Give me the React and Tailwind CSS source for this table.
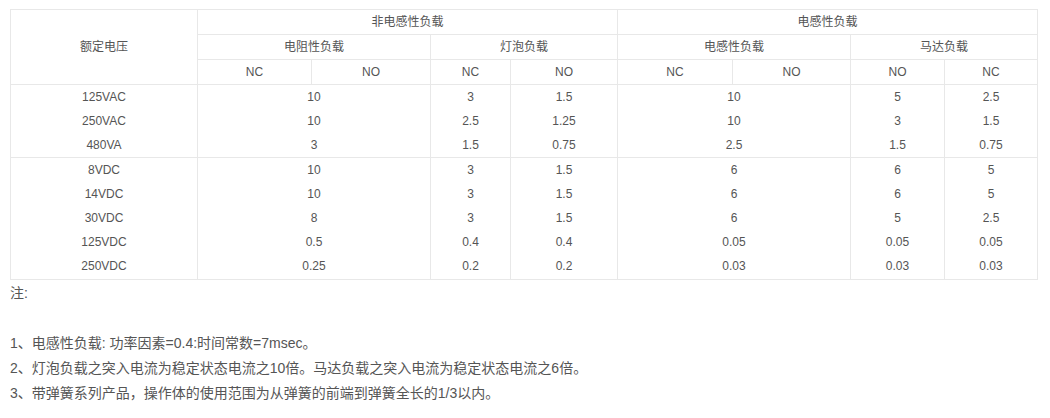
const ac = {
  label: ['125VAC', '250VAC', '480VA'],
  res: ['10', '10', '3'],
  lampNc: ['3', '2.5', '1.5'],
  lampNo: ['1.5', '1.25', '0.75'],
  ind: ['10', '10', '2.5'],
  motNo: ['5', '3', '1.5'],
  motNc: ['2.5', '1.5', '0.75'],
};

const dc = {
  label: ['8VDC', '14VDC', '30VDC', '125VDC', '250VDC'],
  res: ['10', '10', '8', '0.5', '0.25'],
  lampNc: ['3', '3', '3', '0.4', '0.2'],
  lampNo: ['1.5', '1.5', '1.5', '0.4', '0.2'],
  ind: ['6', '6', '6', '0.05', '0.03'],
  motNo: ['6', '6', '5', '0.05', '0.03'],
  motNc: ['5', '5', '2.5', '0.05', '0.03'],
};

const cellBorder = 'border border-[#e8e8e8]';

function Lines({ items }) {
  return (
    <div>
      {items.map((v, i) => (
        <div key={i} className="leading-[24px]">{v}</div>
      ))}
    </div>
  );
}

function Group({ g, h }) {
  return (
    <tr className={h}>
      <td className={`${cellBorder} p-0 align-top`}><Lines items={g.label} /></td>
      <td colSpan={2} className={`${cellBorder} p-0 align-top`}><Lines items={g.res} /></td>
      <td className={`${cellBorder} p-0 align-top`}><Lines items={g.lampNc} /></td>
      <td className={`${cellBorder} p-0 align-top`}><Lines items={g.lampNo} /></td>
      <td colSpan={2} className={`${cellBorder} p-0 align-top`}><Lines items={g.ind} /></td>
      <td className={`${cellBorder} p-0 align-top`}><Lines items={g.motNo} /></td>
      <td className={`${cellBorder} p-0 align-top`}><Lines items={g.motNc} /></td>
    </tr>
  );
}

export default function App() {
  const hd = `${cellBorder} p-0 h-[25px] font-normal`;
  return (
    <div
      className="bg-white w-[1050px] h-[418px] pt-[9px] pl-[10px] text-[#555]"
      style={{ fontFamily: '"Liberation Sans", "Noto Sans CJK SC", sans-serif' }}
    >
      <table className="border-collapse table-fixed w-[1027px] text-[12px] text-center">
        <colgroup>
          <col className="w-[187px]" />
          <col className="w-[114px]" />
          <col className="w-[119px]" />
          <col className="w-[80px]" />
          <col className="w-[107px]" />
          <col className="w-[115px]" />
          <col className="w-[118px]" />
          <col className="w-[94px]" />
          <col className="w-[93px]" />
        </colgroup>
        <thead>
          <tr>
            <th rowSpan={3} className={hd}>额定电压</th>
            <th colSpan={4} className={hd}>非电感性负载</th>
            <th colSpan={4} className={hd}>电感性负载</th>
          </tr>
          <tr>
            <th colSpan={2} className={hd}>电阻性负载</th>
            <th colSpan={2} className={hd}>灯泡负载</th>
            <th colSpan={2} className={hd}>电感性负载</th>
            <th colSpan={2} className={hd}>马达负载</th>
          </tr>
          <tr>
            <th className={hd}>NC</th>
            <th className={hd}>NO</th>
            <th className={hd}>NC</th>
            <th className={hd}>NO</th>
            <th className={hd}>NC</th>
            <th className={hd}>NO</th>
            <th className={hd}>NO</th>
            <th className={hd}>NC</th>
          </tr>
        </thead>
        <tbody>
          <Group g={ac} h="h-[72px]" />
          <Group g={dc} h="h-[122px]" />
        </tbody>
      </table>
      <div className="text-[14px] leading-[25px] mt-[1px]">
        <p>注:</p>
        <p>&nbsp;</p>
        <p>1、电感性负载: 功率因素=0.4:时间常数=7msec。</p>
        <p>2、灯泡负载之突入电流为稳定状态电流之10倍。马达负载之突入电流为稳定状态电流之6倍。</p>
        <p>3、带弹簧系列产品，操作体的使用范围为从弹簧的前端到弹簧全长的1/3以内。</p>
      </div>
    </div>
  );
}
